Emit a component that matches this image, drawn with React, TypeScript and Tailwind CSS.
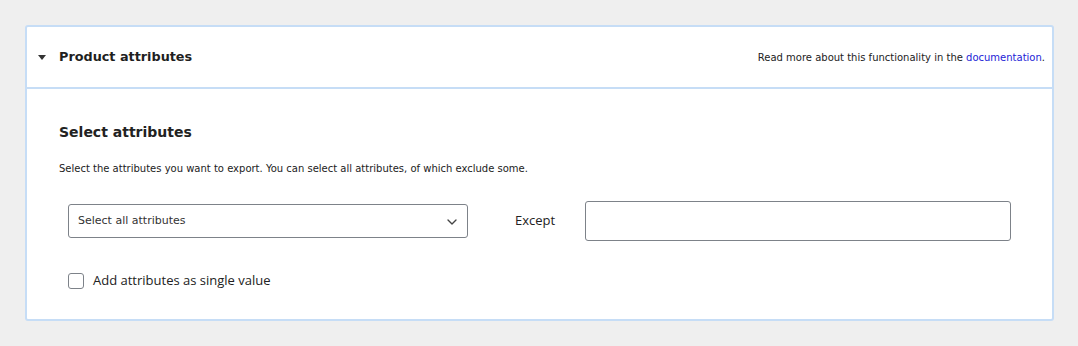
import { ChevronDown } from "lucide-react";

export default function App() {
  return (
    <div
      className="w-[1078px] h-[346px] bg-[#efefef] pt-[25px] pl-[25px]"
      style={{ fontFamily: '"DejaVu Sans", Verdana, sans-serif' }}
    >
      <div className="w-[1029px] h-[296px] bg-white border-2 border-[#c6ddf6] rounded-[3px] flex flex-col">
        {/* header */}
        <div className="h-[62px] flex items-center justify-between pl-[11px] pr-[7px] border-b-2 border-[#c6ddf6] shrink-0">
          <div className="flex items-center">
            <span className="w-0 h-0 border-l-[4px] border-r-[4px] border-t-[5px] border-l-transparent border-r-transparent border-t-[#333] mr-[13px]" />
            <span className="text-[12.8px] font-bold text-[#1f1f1f]">Product attributes</span>
          </div>
          <span className="text-[10px] text-[#222]">
            Read more about this functionality in the{" "}
            <a className="text-[#2323d6]">documentation</a>.
          </span>
        </div>

        {/* body */}
        <div className="pl-[32px] pr-[41px] pt-[34px]">
          <h2 className="text-[14px] font-bold text-[#222] leading-[18px]">Select attributes</h2>
          <p className="text-[10px] text-[#222] mt-[22px] leading-[12px]">
            Select the attributes you want to export. You can select all attributes, of which exclude some.
          </p>

          <div className="flex items-center mt-[26px] pl-[9px]">
            <div className="w-[400px] h-[34px] border border-[#7d8289] rounded-[3px] flex items-center justify-between pl-[9px] pr-[7px] pt-[1px]">
              <span className="text-[11px] text-[#333]">Select all attributes</span>
              <ChevronDown className="w-[16px] h-[16px] text-[#444]" strokeWidth={2} />
            </div>
            <span className="ml-[47px] text-[13px] text-[#222] w-[70px]" style={{ fontFamily: '"Open Sans", sans-serif' }}>
              Except
            </span>
            <div className="w-[426px] h-[40px] border border-[#7d8289] rounded-[3px]" />
          </div>

          <div className="flex items-center mt-[30px] pl-[9px]">
            <span className="w-[16px] h-[16px] border border-[#7d8289] rounded-[3px] mr-[9px]" />
            <span className="text-[13px] text-[#222]" style={{ fontFamily: '"Open Sans", sans-serif' }}>
              Add attributes as single value
            </span>
          </div>
        </div>
      </div>
    </div>
  );
}
